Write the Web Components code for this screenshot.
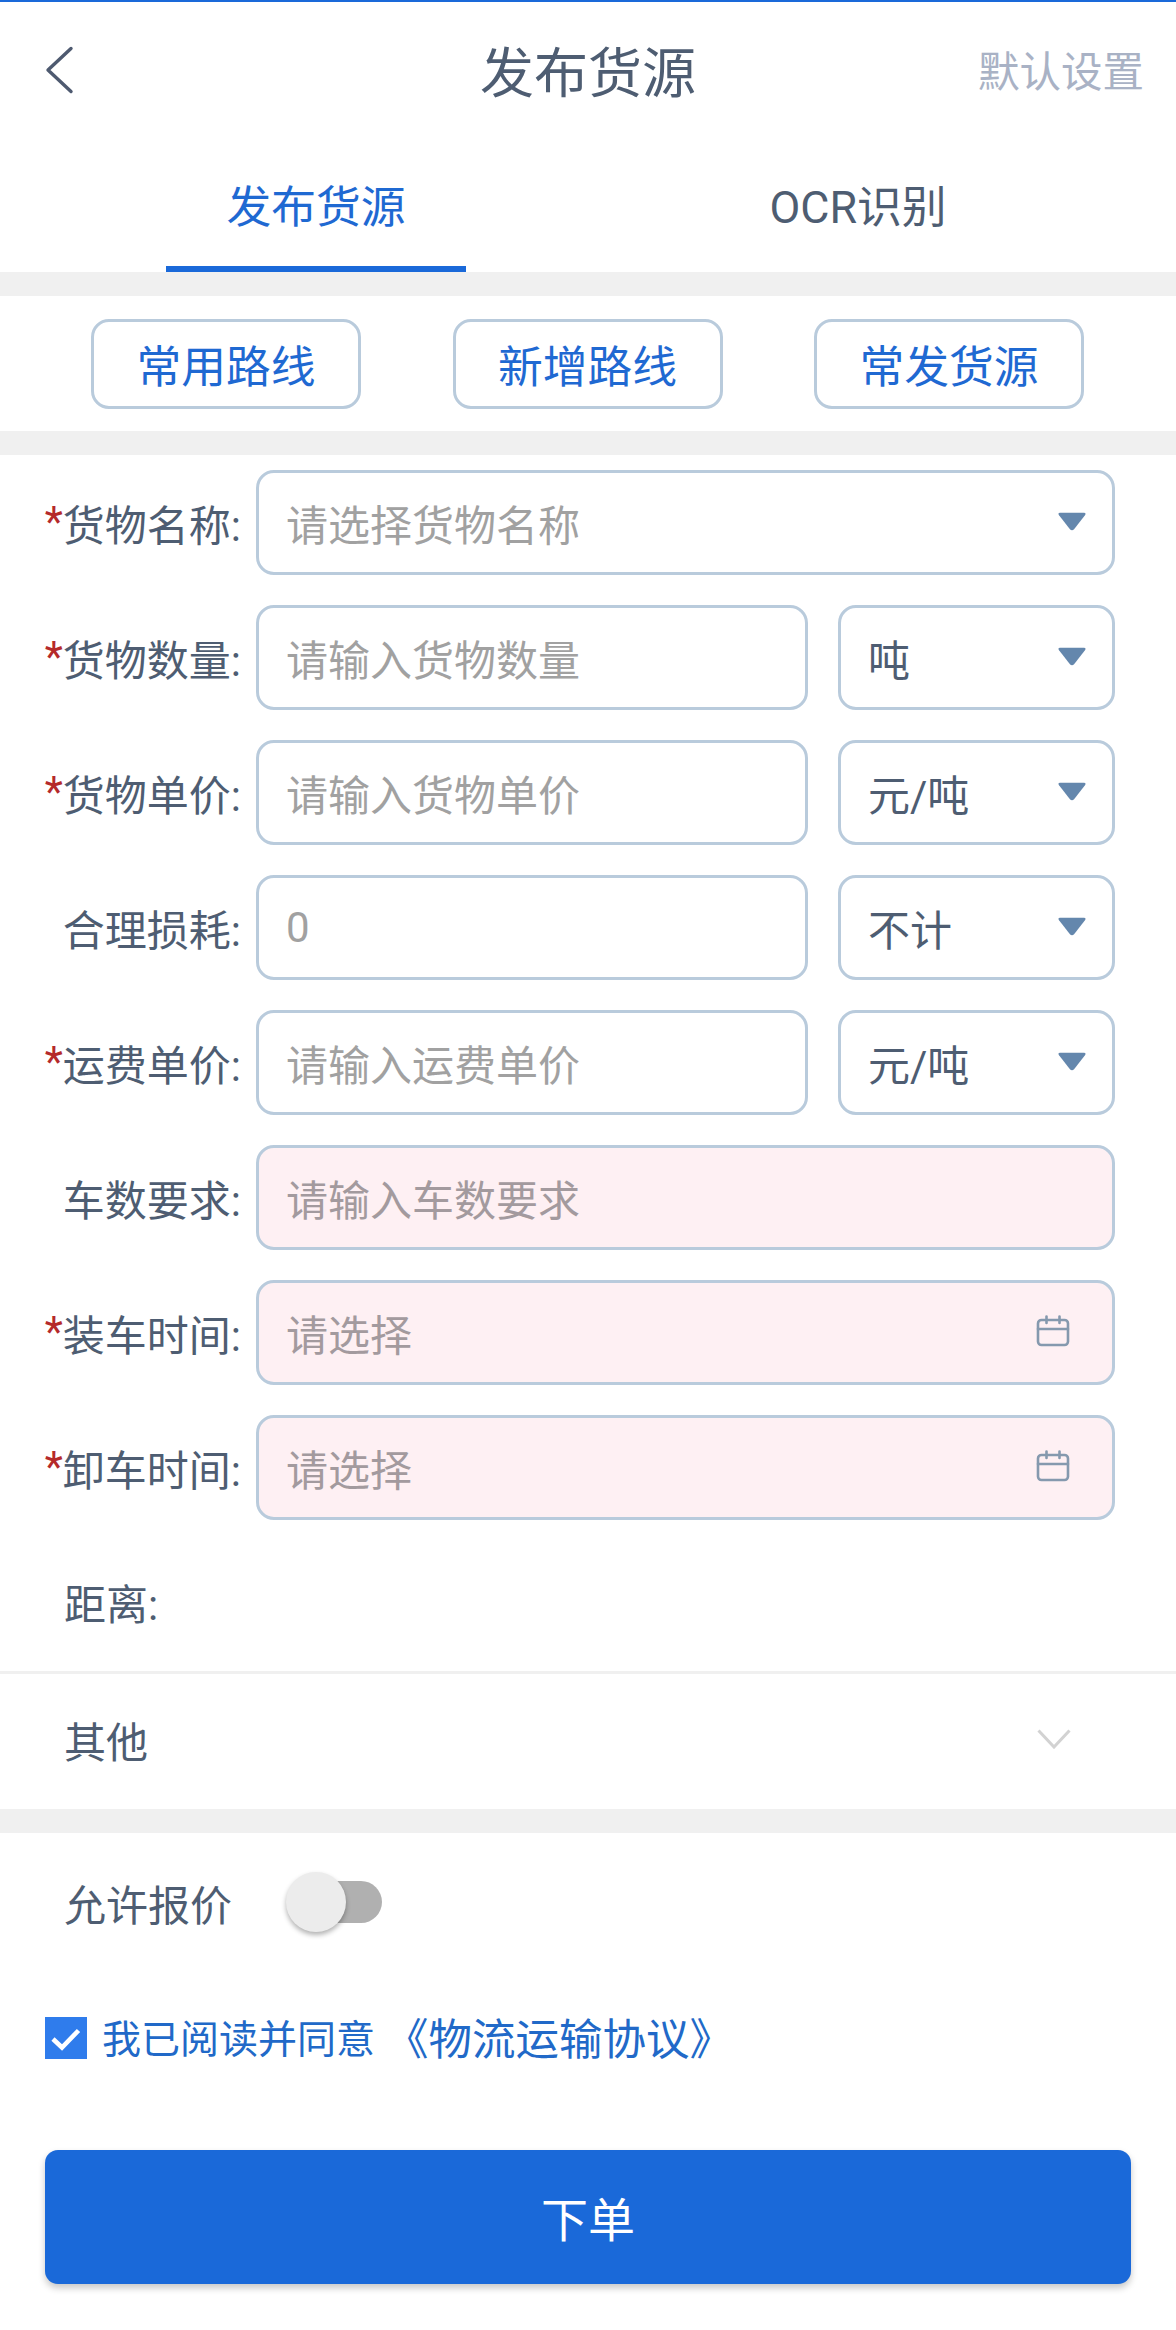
<!DOCTYPE html>
<html lang="zh">
<head>
<meta charset="utf-8">
<title>发布货源</title>
<style>
    html, body { margin: 0; padding: 0; background: #fff; }
    body { font-family: Roboto, "Noto Sans CJK SC", sans-serif; color: #4e5d72; }
</style>
</head>
<body>
<publish-page>
    <nav-bar title="发布货源" action="默认设置"></nav-bar>
    <tab-bar first="发布货源" second="OCR识别"></tab-bar>
    <gap-bar></gap-bar>
    <route-buttons>
        <outline-button>常用路线</outline-button>
        <outline-button>新增路线</outline-button>
        <outline-button>常发货源</outline-button>
    </route-buttons>
    <gap-bar></gap-bar>
    <cargo-form>
        <form-row label="货物名称" required>
            <form-field placeholder="请选择货物名称" icon="caret" grow></form-field>
        </form-row>
        <form-row label="货物数量" required>
            <form-field placeholder="请输入货物数量" grow></form-field>
            <form-field value="吨" icon="caret" unit></form-field>
        </form-row>
        <form-row label="货物单价" required>
            <form-field placeholder="请输入货物单价" grow></form-field>
            <form-field value="元/吨" icon="caret" unit></form-field>
        </form-row>
        <form-row label="合理损耗">
            <form-field placeholder="0" grow></form-field>
            <form-field value="不计" icon="caret" unit></form-field>
        </form-row>
        <form-row label="运费单价" required>
            <form-field placeholder="请输入运费单价" grow></form-field>
            <form-field value="元/吨" icon="caret" unit></form-field>
        </form-row>
        <form-row label="车数要求">
            <form-field placeholder="请输入车数要求" pink grow></form-field>
        </form-row>
        <form-row label="装车时间" required>
            <form-field placeholder="请选择" icon="calendar" pink grow></form-field>
        </form-row>
        <form-row label="卸车时间" required>
            <form-field placeholder="请选择" icon="calendar" pink grow></form-field>
        </form-row>
    </cargo-form>
    <distance-row>距离:</distance-row>
    <collapse-row>其他</collapse-row>
    <gap-bar></gap-bar>
    <switch-row>允许报价</switch-row>
    <agree-row text="我已阅读并同意" link="《物流运输协议》"></agree-row>
    <submit-button>下单</submit-button>
</publish-page>

<script>
class PublishPage extends HTMLElement {
    constructor() {
        super();
        this.attachShadow({mode: 'open'});
        this.shadowRoot.innerHTML = `
            <style>
                :host {
                    display: flex;
                    flex-direction: column;
                    width: 1176px;
                    height: 2330px;
                    background: #fff;
                    border-top: 2px solid #1a69d9;
                    box-sizing: border-box;
                    overflow: hidden;
                }
            </style>
            <slot></slot>
        `;
    }
}

class NavBar extends HTMLElement {
    constructor() {
        super();
        this.attachShadow({mode: 'open'});
        this.shadowRoot.innerHTML = `
            <style>
                :host {
                    display: grid;
                    grid-template-columns: 436px auto 1fr;
                    align-items: center;
                    box-sizing: border-box;
                    height: 140px;
                    padding: 5px 32px 0 44px;
                }
                svg { display: block; width: 30px; height: 48px; margin-bottom: 9px; }
                .title { font-size: 54px; line-height: 70px; color: #4e5d72; }
                .action { font-size: 41.5px; line-height: 60px; color: #a9b2c5; text-align: right; margin-bottom: 3px; }
            </style>
            <svg viewBox="0 0 30 48" fill="none" stroke="#4e5a70" stroke-width="3.4" stroke-linecap="round" stroke-linejoin="round">
                <path d="M27 2.5 L4 24 L27 45.5"/>
            </svg>
            <div class="title"></div>
            <div class="action"></div>
        `;
        this.shadowRoot.querySelector('.title').textContent = this.getAttribute('title');
        this.shadowRoot.querySelector('.action').textContent = this.getAttribute('action');
    }
}

class TabBar extends HTMLElement {
    constructor() {
        super();
        this.attachShadow({mode: 'open'});
        this.shadowRoot.innerHTML = `
            <style>
                :host {
                    display: grid;
                    grid-template-columns: 1fr 1fr;
                    height: 130px;
                    padding: 0 47px 0 45px;
                }
                .tab {
                    position: relative;
                    display: flex;
                    align-items: center;
                    justify-content: center;
                    padding-bottom: 8px;
                    font-size: 44.8px;
                    color: #4e5d72;
                }
                .tab.active { color: #1f69d2; }
                .tab.active::after {
                    content: "";
                    position: absolute;
                    bottom: 0;
                    left: 121px;
                    width: 300px;
                    height: 6px;
                    background: #1a69d9;
                }
            </style>
            <div class="tab active"></div>
            <div class="tab"></div>
        `;
        const tabs = this.shadowRoot.querySelectorAll('.tab');
        tabs[0].textContent = this.getAttribute('first');
        tabs[1].textContent = this.getAttribute('second');
    }
}

class GapBar extends HTMLElement {
    constructor() {
        super();
        this.attachShadow({mode: 'open'});
        this.shadowRoot.innerHTML = `
            <style>
                :host { display: block; height: 24px; background: #f0f0f0; flex: none; }
            </style>
        `;
    }
}

class RouteButtons extends HTMLElement {
    constructor() {
        super();
        this.attachShadow({mode: 'open'});
        this.shadowRoot.innerHTML = `
            <style>
                :host {
                    display: flex;
                    gap: 91.5px;
                    align-items: center;
                    height: 135px;
                    padding-left: 91px;
                }
            </style>
            <slot></slot>
        `;
    }
}

class OutlineButton extends HTMLElement {
    constructor() {
        super();
        this.attachShadow({mode: 'open'});
        this.shadowRoot.innerHTML = `
            <style>
                :host {
                    display: flex;
                    align-items: center;
                    justify-content: center;
                    box-sizing: border-box;
                    width: 270px;
                    height: 90px;
                    border: 3px solid #b9cbdc;
                    border-radius: 18px;
                    font-size: 44.8px;
                    color: #1f69d2;
                }
            </style>
            <slot></slot>
        `;
    }
}

class CargoForm extends HTMLElement {
    constructor() {
        super();
        this.attachShadow({mode: 'open'});
        this.shadowRoot.innerHTML = `
            <style>
                :host {
                    display: flex;
                    flex-direction: column;
                    gap: 30px;
                    padding-top: 15px;
                }
            </style>
            <slot></slot>
        `;
    }
}

class FormRow extends HTMLElement {
    constructor() {
        super();
        this.attachShadow({mode: 'open'});
        this.shadowRoot.innerHTML = `
            <style>
                :host {
                    display: flex;
                    align-items: center;
                    height: 105px;
                    padding: 0 61px 0 45px;
                }
                .label {
                    width: 196px;
                    margin-right: 15px;
                    flex: none;
                    display: flex;
                    justify-content: flex-end;
                    align-items: center;
                    white-space: nowrap;
                    font-size: 42px;
                    color: #4e5d72;
                }
                .star { color: #b52a2a; margin-right: auto; position: relative; top: -1px; }
                .fields { flex: 1; display: flex; gap: 30px; min-width: 0; }
            </style>
            <div class="label"><span class="star"></span><span class="text"></span></div>
            <div class="fields"><slot></slot></div>
        `;
        this.shadowRoot.querySelector('.text').textContent = this.getAttribute('label') + ':';
        if (this.hasAttribute('required')) this.shadowRoot.querySelector('.star').textContent = '*';
    }
}

class FormField extends HTMLElement {
    constructor() {
        super();
        this.attachShadow({mode: 'open'});
        this.shadowRoot.innerHTML = `
            <style>
                :host {
                    display: flex;
                    align-items: center;
                    justify-content: space-between;
                    box-sizing: border-box;
                    height: 105px;
                    padding: 0 29px 0 27px;
                    background: #fff;
                    border: 3px solid #b9cbdc;
                    border-radius: 18px;
                    font-size: 42px;
                    min-width: 0;
                }
                :host([grow]) { flex: 1; }
                :host([unit]) { flex: none; width: 277px; }
                :host([pink]) { background: #fef0f3; }
                .value { color: #4e5d72; }
                .placeholder { color: #a1a1a1; }
                :host([pink]) .placeholder { color: #a39a9e; }
                svg { display: block; flex: none; }
                .caret { width: 28px; height: 19px; margin-right: -3px; position: relative; top: -1px; }
                .calendar { width: 34px; height: 32px; margin-right: 13px; position: relative; top: -2px; }
            </style>
            <span></span>
        `;
        const span = this.shadowRoot.querySelector('span');
        if (this.hasAttribute('value')) {
            span.className = 'value';
            span.textContent = this.getAttribute('value');
        } else {
            span.className = 'placeholder';
            span.textContent = this.getAttribute('placeholder');
        }
        const icon = this.getAttribute('icon');
        if (icon === 'caret') {
            span.insertAdjacentHTML('afterend', `
                <svg class="caret" viewBox="0 0 27 18">
                    <path d="M2 0.5 H25 Q27.5 0.5 26 3 L15.5 16.5 Q13.5 18.5 11.5 16.5 L1 3 Q-0.5 0.5 2 0.5 Z" fill="#6487ad"/>
                </svg>`);
        } else if (icon === 'calendar') {
            span.insertAdjacentHTML('afterend', `
                <svg class="calendar" viewBox="0 0 34 32" fill="none" stroke="#8599ae" stroke-width="2.6" stroke-linecap="round">
                    <rect x="2" y="5" width="30" height="25" rx="3.5"/>
                    <path d="M2 14 H32 M10.5 1.5 V8 M23.5 1.5 V8"/>
                </svg>`);
        }
    }
}

class DistanceRow extends HTMLElement {
    constructor() {
        super();
        this.attachShadow({mode: 'open'});
        this.shadowRoot.innerHTML = `
            <style>
                :host {
                    display: flex;
                    align-items: center;
                    box-sizing: border-box;
                    height: 154px;
                    padding: 12px 64px 0;
                    border-bottom: 3px solid #f0f0f0;
                    font-size: 42px;
                    color: #4e5d72;
                }
            </style>
            <slot></slot>
        `;
    }
}

class CollapseRow extends HTMLElement {
    constructor() {
        super();
        this.attachShadow({mode: 'open'});
        this.shadowRoot.innerHTML = `
            <style>
                :host {
                    display: flex;
                    align-items: center;
                    justify-content: space-between;
                    box-sizing: border-box;
                    height: 135px;
                    padding: 0 105px 4px 64px;
                    font-size: 42px;
                    color: #4e5d72;
                }
                svg { display: block; width: 34px; height: 20px; position: relative; top: -1px; }
            </style>
            <span><slot></slot></span>
            <svg viewBox="0 0 34 20" fill="none" stroke="#d2d2d2" stroke-width="3">
                <path d="M1.5 1.5 L17 18 L32.5 1.5"/>
            </svg>
        `;
    }
}

class SwitchRow extends HTMLElement {
    constructor() {
        super();
        this.attachShadow({mode: 'open'});
        this.shadowRoot.innerHTML = `
            <style>
                :host {
                    display: flex;
                    align-items: center;
                    gap: 58px;
                    height: 138px;
                    padding-left: 64px;
                    font-size: 42px;
                    color: #4e5d72;
                }
                .track {
                    position: relative;
                    width: 92px;
                    height: 42px;
                    border-radius: 21px;
                    background: #b0b0b0;
                }
                .knob {
                    position: absolute;
                    left: -4px;
                    top: -9px;
                    width: 60px;
                    height: 60px;
                    border-radius: 50%;
                    background: #ececec;
                    box-shadow: 0 3px 5px rgba(0,0,0,.3);
                }
            </style>
            <span><slot></slot></span>
            <div class="track"><div class="knob"></div></div>
        `;
    }
}

class AgreeRow extends HTMLElement {
    constructor() {
        super();
        this.attachShadow({mode: 'open'});
        this.shadowRoot.innerHTML = `
            <style>
                :host {
                    display: flex;
                    align-items: center;
                    height: 60px;
                    margin-top: 37px;
                    padding-left: 45px;
                    font-size: 39px;
                    color: #2169c8;
                    white-space: nowrap;
                }
                svg { display: block; width: 42px; height: 42px; flex: none; margin-right: 15px; }
                .text { position: relative; top: -2px; }
                .link { font-size: 43.5px; margin-left: 10px; position: relative; top: -2px; }
            </style>
            <svg viewBox="0 0 42 42">
                <rect width="42" height="42" fill="#2f7cec"/>
                <path d="M8 22 L17 30.5 L33.5 13.5" fill="none" stroke="#fff" stroke-width="4.6"/>
            </svg>
            <span class="text"></span>
            <span class="link"></span>
        `;
        this.shadowRoot.querySelector('.text').textContent = this.getAttribute('text');
        this.shadowRoot.querySelector('.link').textContent = this.getAttribute('link');
    }
}

class SubmitButton extends HTMLElement {
    constructor() {
        super();
        this.attachShadow({mode: 'open'});
        this.shadowRoot.innerHTML = `
            <style>
                :host {
                    display: flex;
                    align-items: center;
                    justify-content: center;
                    box-sizing: border-box;
                    flex: none;
                    width: 1086px;
                    height: 134px;
                    margin: 82px 0 0 45px;
                    padding-bottom: 2px;
                    border-radius: 13px;
                    background: #1a69d9;
                    box-shadow: 0 4px 7px rgba(0,0,0,.22);
                    font-size: 47px;
                    color: #fff;
                }
            </style>
            <slot></slot>
        `;
    }
}

customElements.define('publish-page', PublishPage);
customElements.define('nav-bar', NavBar);
customElements.define('tab-bar', TabBar);
customElements.define('gap-bar', GapBar);
customElements.define('route-buttons', RouteButtons);
customElements.define('outline-button', OutlineButton);
customElements.define('cargo-form', CargoForm);
customElements.define('form-row', FormRow);
customElements.define('form-field', FormField);
customElements.define('distance-row', DistanceRow);
customElements.define('collapse-row', CollapseRow);
customElements.define('switch-row', SwitchRow);
customElements.define('agree-row', AgreeRow);
customElements.define('submit-button', SubmitButton);
</script>
</body>
</html>
